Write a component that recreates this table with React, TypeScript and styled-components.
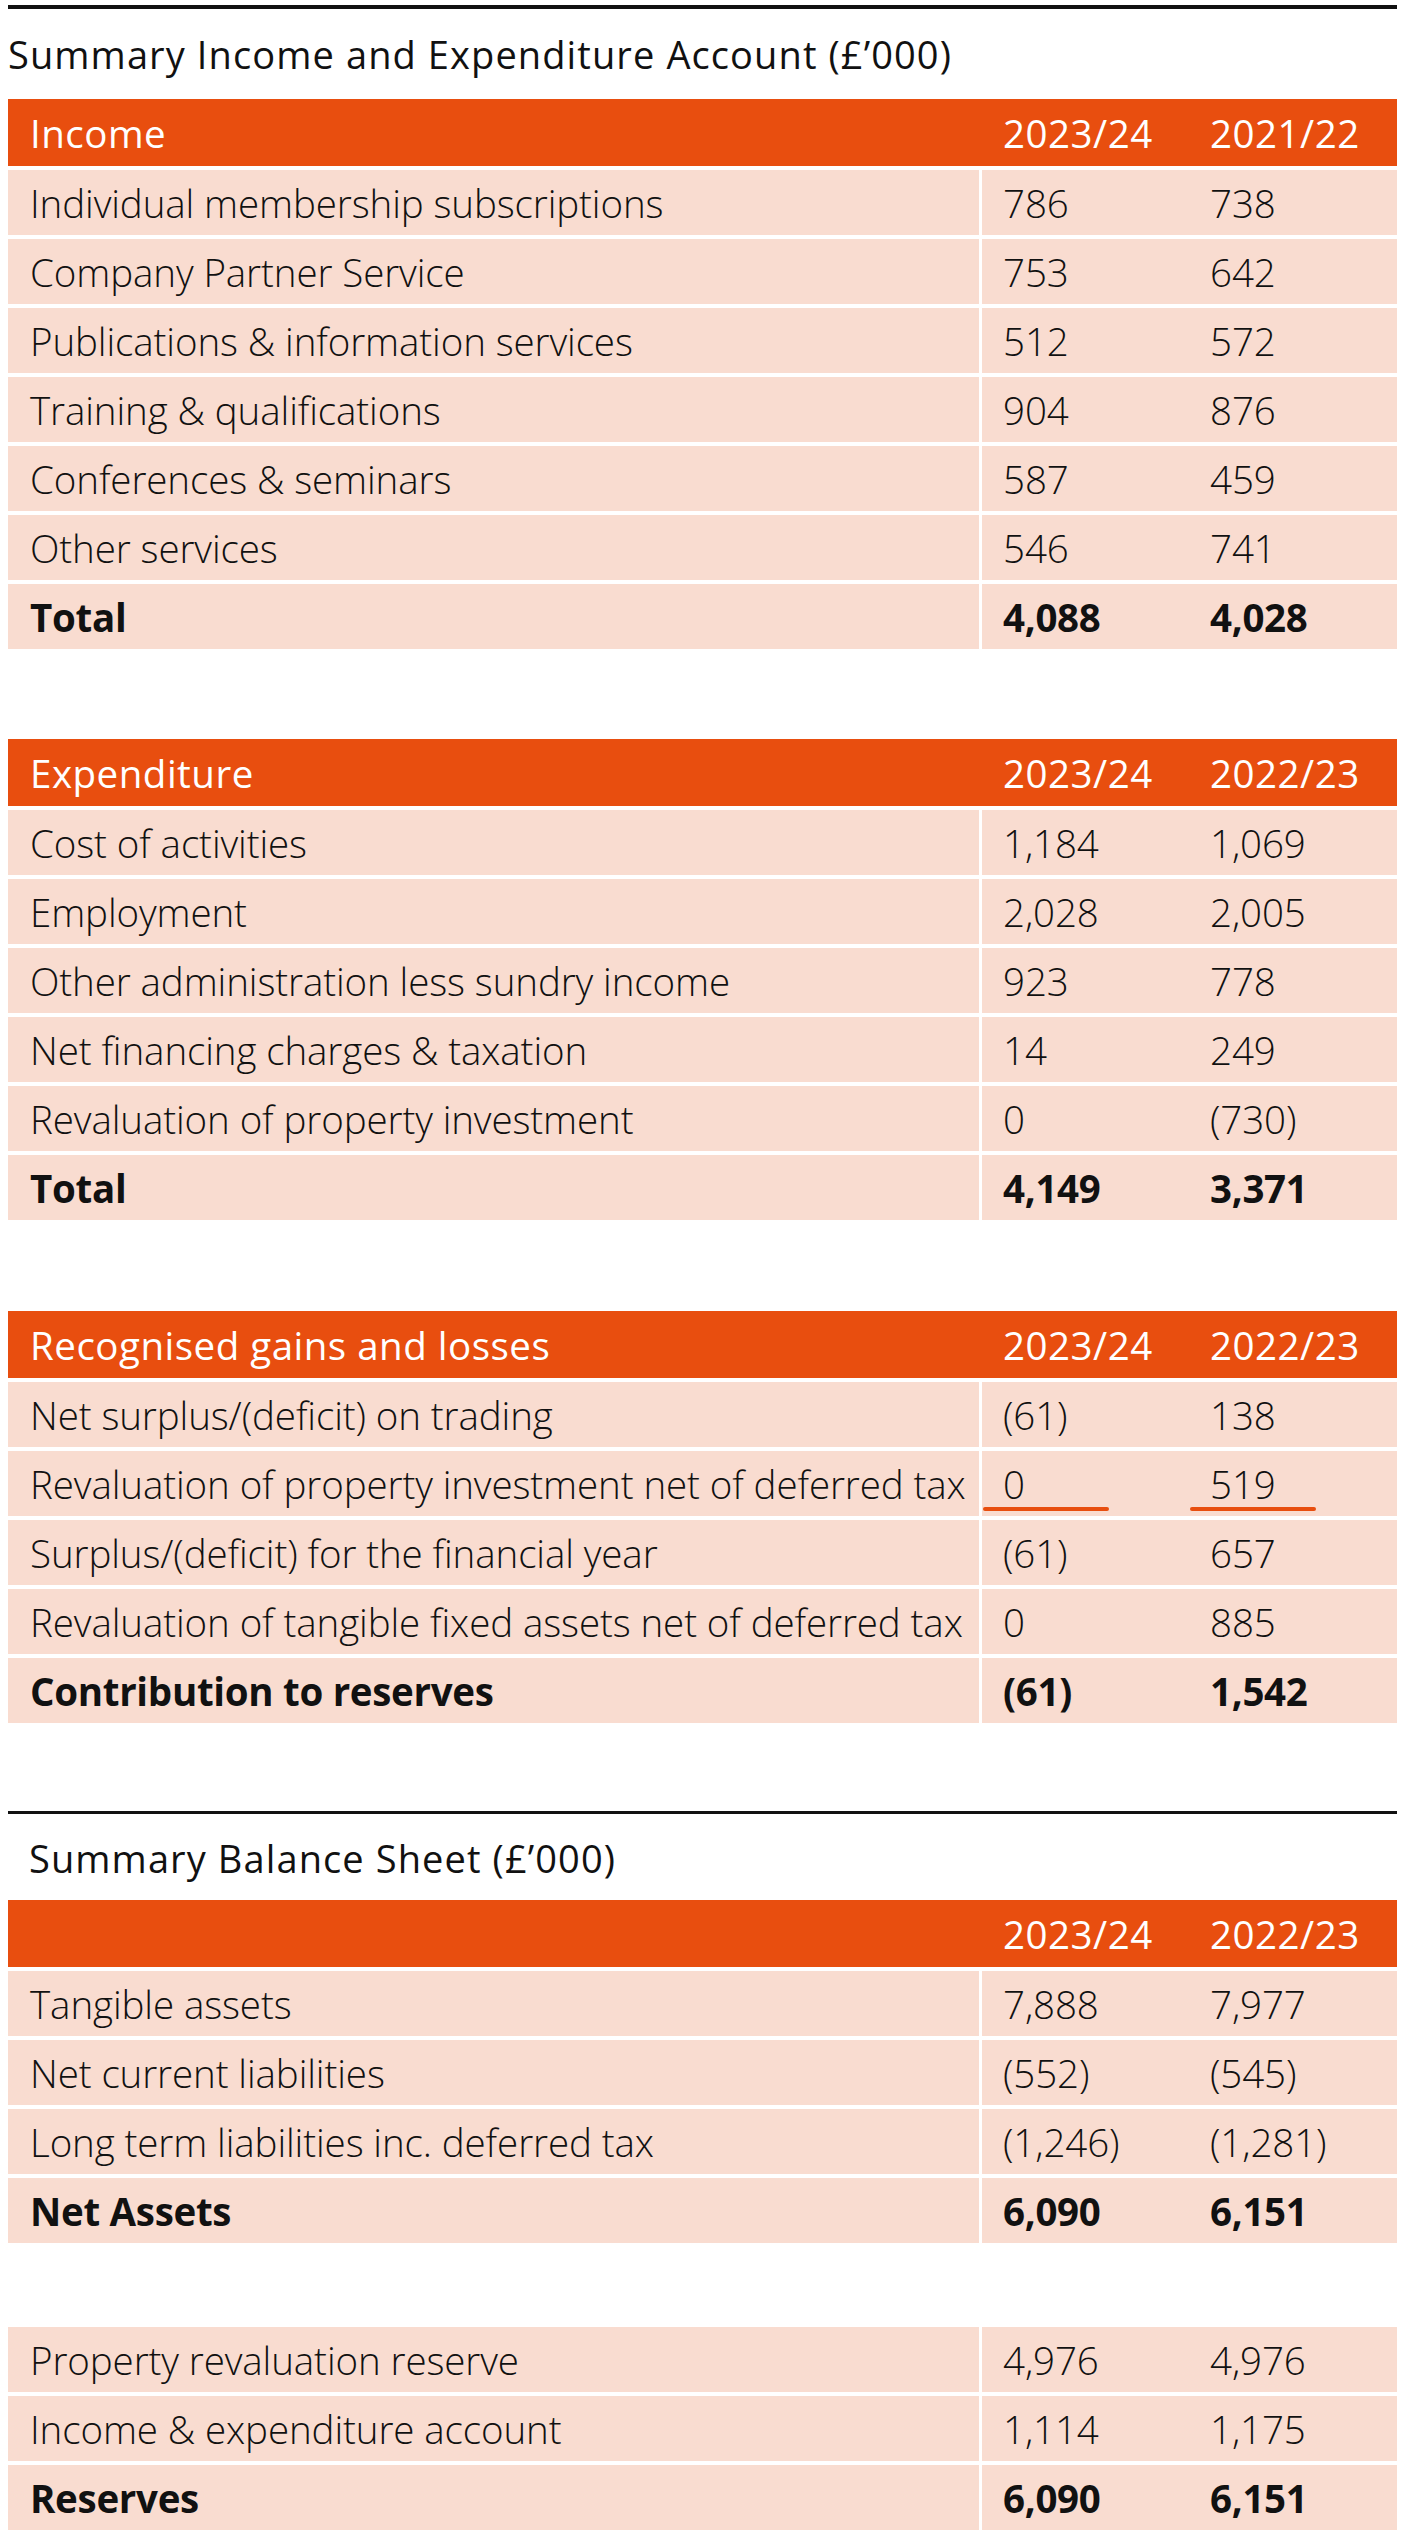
import React from "react";
import styled, { createGlobalStyle } from "styled-components";

const GlobalStyle = createGlobalStyle`
  html, body {
    margin: 0;
    padding: 0;
    background: #ffffff;
  }
  body {
    font-family: "Open Sans", "Liberation Sans", sans-serif;
    color: #111111;
  }
`;

const ORANGE = "#e84e0f";
const PEACH = "#f9dcd0";

const Page = styled.div`
  width: 1389px;
  padding: 5px 8px 8px;
`;

const Rule = styled.div<{ $thick?: number }>`
  height: ${(p) => p.$thick ?? 4}px;
  background: #111111;
`;

const Title = styled.h2<{ $indent?: boolean }>`
  margin: ${(p) => (p.$indent ? "2px 0 0" : "0")};
  padding-left: ${(p) => (p.$indent ? 21 : 0)}px;
  font-size: 38px;
  font-weight: 400;
  letter-spacing: 1.1px;
  line-height: 46px;
  height: ${(p) => (p.$indent ? 84 : 90)}px;
  display: flex;
  align-items: center;
`;

const Table = styled.div<{ $gap?: number }>`
  display: flex;
  flex-direction: column;
  gap: 4px;
  margin-top: ${(p) => p.$gap ?? 0}px;
`;

const Row = styled.div<{ $head?: boolean; $bold?: boolean }>`
  display: grid;
  grid-template-columns: 974px 207px 208px;
  height: ${(p) => (p.$head ? 67 : 65)}px;
  background: ${(p) => (p.$head ? ORANGE : PEACH)};
  color: ${(p) => (p.$head ? "#ffffff" : "#111111")};
  font-size: 38.5px;
  letter-spacing: ${(p) => (p.$head ? 0.5 : p.$bold ? -0.3 : -0.1)}px;
  font-weight: ${(p) => (p.$head ? 400 : p.$bold ? 700 : 300)};
`;

const Cell = styled.div<{ $first?: boolean; $head?: boolean; $underline?: boolean }>`
  position: relative;
  display: flex;
  align-items: center;
  padding-left: ${(p) => (p.$first ? 22 : 21)}px;
  border-right: ${(p) => (p.$first && !p.$head ? "3px solid #ffffff" : "none")};
  white-space: nowrap;

  &::after {
    content: "";
    display: ${(p) => (p.$underline ? "block" : "none")};
    position: absolute;
    left: 1px;
    bottom: 5px;
    width: 126px;
    height: 4px;
    border-radius: 2px;
    background: ${ORANGE};
  }
`;

interface Line {
  label: string;
  a: string;
  b: string;
  bold?: boolean;
  underline?: boolean;
}

interface Section {
  heading: string;
  years: [string, string];
  lines: Line[];
}

const income: Section = {
  heading: "Income",
  years: ["2023/24", "2021/22"],
  lines: [
    { label: "Individual membership subscriptions", a: "786", b: "738" },
    { label: "Company Partner Service", a: "753", b: "642" },
    { label: "Publications & information services", a: "512", b: "572" },
    { label: "Training & qualifications", a: "904", b: "876" },
    { label: "Conferences & seminars", a: "587", b: "459" },
    { label: "Other services", a: "546", b: "741" },
    { label: "Total", a: "4,088", b: "4,028", bold: true },
  ],
};

const expenditure: Section = {
  heading: "Expenditure",
  years: ["2023/24", "2022/23"],
  lines: [
    { label: "Cost of activities", a: "1,184", b: "1,069" },
    { label: "Employment", a: "2,028", b: "2,005" },
    { label: "Other administration less sundry income", a: "923", b: "778" },
    { label: "Net financing charges & taxation", a: "14", b: "249" },
    { label: "Revaluation of property investment", a: "0", b: "(730)" },
    { label: "Total", a: "4,149", b: "3,371", bold: true },
  ],
};

const gains: Section = {
  heading: "Recognised gains and losses",
  years: ["2023/24", "2022/23"],
  lines: [
    { label: "Net surplus/(deficit) on trading", a: "(61)", b: "138" },
    {
      label: "Revaluation of property investment net of deferred tax",
      a: "0",
      b: "519",
      underline: true,
    },
    { label: "Surplus/(deficit) for the financial year", a: "(61)", b: "657" },
    { label: "Revaluation of tangible fixed assets net of deferred tax", a: "0", b: "885" },
    { label: "Contribution to reserves", a: "(61)", b: "1,542", bold: true },
  ],
};

const balance: Section = {
  heading: "",
  years: ["2023/24", "2022/23"],
  lines: [
    { label: "Tangible assets", a: "7,888", b: "7,977" },
    { label: "Net current liabilities", a: "(552)", b: "(545)" },
    { label: "Long term liabilities inc. deferred tax", a: "(1,246)", b: "(1,281)" },
    { label: "Net Assets", a: "6,090", b: "6,151", bold: true },
  ],
};

const reserves: Line[] = [
  { label: "Property revaluation reserve", a: "4,976", b: "4,976" },
  { label: "Income & expenditure account", a: "1,114", b: "1,175" },
  { label: "Reserves", a: "6,090", b: "6,151", bold: true },
];

const BodyRow = ({ line }: { line: Line }) => (
  <Row $bold={line.bold}>
    <Cell $first>{line.label}</Cell>
    <Cell $underline={line.underline}>{line.a}</Cell>
    <Cell $underline={line.underline}>{line.b}</Cell>
  </Row>
);

const SectionTable = ({ section, gap }: { section: Section; gap?: number }) => (
  <Table $gap={gap}>
    <Row $head>
      <Cell $first $head>
        {section.heading}
      </Cell>
      <Cell $head>{section.years[0]}</Cell>
      <Cell $head>{section.years[1]}</Cell>
    </Row>
    {section.lines.map((line) => (
      <BodyRow key={line.label} line={line} />
    ))}
  </Table>
);

export default function App() {
  return (
    <Page>
      <GlobalStyle />
      <Rule />
      <Title>Summary Income and Expenditure Account (£’000)</Title>
      <SectionTable section={income} />
      <SectionTable section={expenditure} gap={90} />
      <SectionTable section={gains} gap={91} />

      <Table $gap={88}>
        <Rule $thick={3} />
      </Table>
      <Title $indent>Summary Balance Sheet (£’000)</Title>
      <SectionTable section={balance} />
      <Table $gap={84}>
        {reserves.map((line) => (
          <BodyRow key={line.label} line={line} />
        ))}
      </Table>
    </Page>
  );
}
